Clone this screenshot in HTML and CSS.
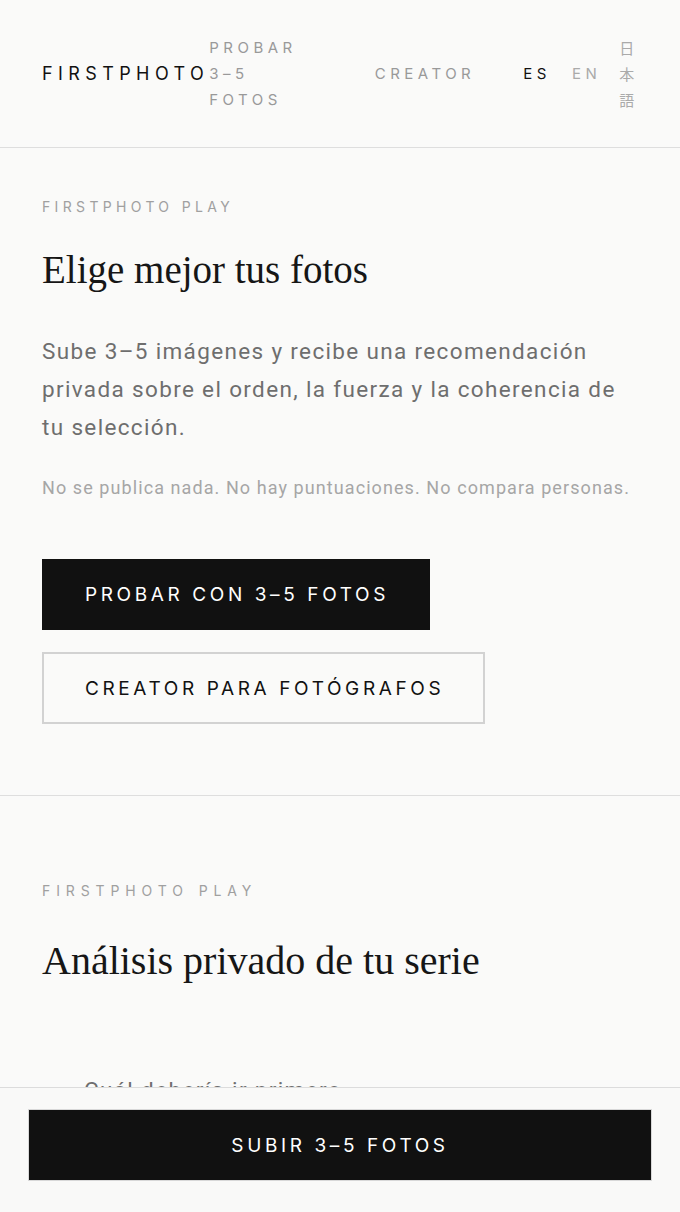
FILE: index.html
```html
<!DOCTYPE html>
<html lang="es">
<head>
<meta charset="utf-8">
<title>FirstPhoto Play</title>
<link rel="stylesheet" href="styles.css">
</head>
<body>
<header class="site-header">
  <a class="logo" href="#">FIRSTPHOTO</a>
  <nav class="nav">
    <a class="nav-link nav-try" href="#">PROBAR 3–5 FOTOS</a>
    <a class="nav-link nav-creator" href="#">CREATOR</a>
    <div class="langs">
      <a class="lang active" href="#">ES</a>
      <a class="lang" href="#">EN</a>
      <a class="lang lang-ja" href="#">日本語</a>
    </div>
  </nav>
</header>

<main>
  <section class="hero">
    <p class="eyebrow">FIRSTPHOTO PLAY</p>
    <h1 class="title">Elige mejor tus fotos</h1>
    <p class="lead">Sube 3–5 imágenes y recibe una recomendación privada sobre el orden, la fuerza y la coherencia de tu selección.</p>
    <p class="note">No se publica nada. No hay puntuaciones. No compara personas.</p>
    <div class="actions">
      <a class="btn btn-dark" href="#">PROBAR CON 3–5 FOTOS</a>
      <a class="btn btn-outline" href="#">CREATOR PARA FOTÓGRAFOS</a>
    </div>
  </section>

  <section class="analysis">
    <p class="eyebrow eyebrow-wide">FIRSTPHOTO PLAY</p>
    <h2 class="title">Análisis privado de tu serie</h2>
    <ul class="points">
      <li>Cuál debería ir primero</li>
    </ul>
  </section>
</main>

<div class="sticky-bar">
  <a class="btn btn-dark btn-block" href="#">SUBIR 3–5 FOTOS</a>
</div>
</body>
</html>
```

FILE: styles.css
```css
* { box-sizing: border-box; }
html, body { margin: 0; padding: 0; }
body {
  background: #fafaf9;
  color: #111;
  font-family: Inter, "Noto Sans", sans-serif;
}
a { text-decoration: none; color: inherit; }
p, h1, h2, ul { margin: 0; }

.site-header {
  display: flex;
  align-items: center;
  height: 148px;
  padding: 0 42px;
  border-bottom: 1px solid #dedede;
}
.logo {
  flex: none;
  font-size: 18px;
  letter-spacing: 0.3em;
  color: #111;
  line-height: 26px;
}
.nav {
  display: flex;
  align-items: center;
  font-size: 15px;
  line-height: 26px;
  letter-spacing: 0.3em;
}
.nav-link { color: #999; }
.nav-try { width: min-content; }
.nav-creator { margin-left: 78px; white-space: nowrap; }
.langs {
  display: flex;
  align-items: center;
  gap: 21px;
  margin-left: 48px;
}
.lang { color: #aaa; white-space: nowrap; }
.lang.active { color: #111; }
.lang-ja {
  font-family: "Noto Sans CJK JP", sans-serif;
  width: 1em;
  margin-left: -3px;
  white-space: normal;
  letter-spacing: 0;
  font-size: 15px;
  line-height: 26px;
  color: #aaa;
}

.hero {
  padding: 49px 42px 71px;
  border-bottom: 1px solid #dedede;
}
.eyebrow {
  font-size: 14px;
  line-height: 20px;
  letter-spacing: 0.31em;
  color: #a0a0a0;
}
.eyebrow-wide { letter-spacing: 0.42em; }
.title {
  font-family: "Liberation Serif", "DejaVu Serif", serif;
  font-weight: 400;
  font-size: 39px;
  line-height: 48px;
  color: #161616;
  margin-top: 29px;
}
.analysis .title { font-size: 40px; }
.lead {
  margin-top: 38px;
  font-family: Roboto, "Liberation Sans", sans-serif;
  font-size: 22.5px;
  line-height: 38px;
  letter-spacing: 0.06em;
  color: #6e6e6e;
}
.note {
  margin-top: 29px;
  font-family: Roboto, "Liberation Sans", sans-serif;
  font-size: 18px;
  line-height: 26px;
  letter-spacing: 0.06em;
  color: #a6a6a6;
}
.actions {
  margin-top: 58px;
  display: flex;
  flex-direction: column;
  align-items: flex-start;
  gap: 22px;
}
.btn {
  display: inline-flex;
  align-items: center;
  justify-content: center;
  height: 72px;
  padding: 0 40px 0 42px;
  font-size: 19px;
  letter-spacing: 0.19em;
}
.btn-dark {
  background: #111;
  color: #fff;
  border: 1px solid #111;
  height: 71px;
}
.btn-outline {
  background: transparent;
  color: #111;
  border: 2px solid #d2d2d2;
  padding: 0 39px 0 41px;
}

.analysis {
  padding: 85px 42px 160px;
}
.analysis .title { margin-top: 36px; }
.points {
  list-style: none;
  margin-top: 86px;
  padding-left: 42px;
  font-family: Roboto, "Liberation Sans", sans-serif;
  font-size: 22.5px;
  line-height: 38px;
  letter-spacing: 0.06em;
  color: #6e6e6e;
}

.sticky-bar {
  position: fixed;
  left: 0;
  right: 0;
  bottom: 0;
  padding: 21px 28px 31px;
  background: #f9f9f8;
  border-top: 1px solid #dcdcdc;
}
.btn-block {
  display: flex;
  width: 100%;
  height: 72px;
  padding: 0;
  border-color: #d8d8d8;
}
```
